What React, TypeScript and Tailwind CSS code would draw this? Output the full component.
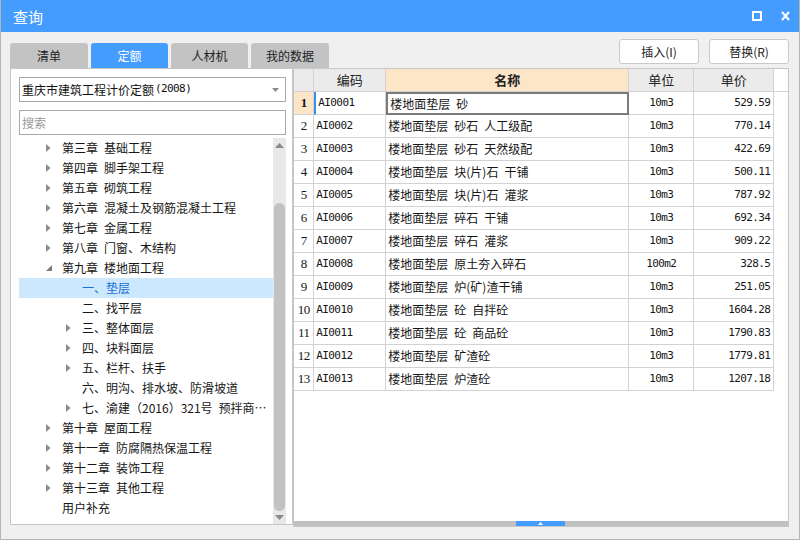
import React from "react";

const cjk = { fontFamily: '"Noto Sans CJK SC", "Noto Sans", sans-serif' };
const mono = { fontFamily: '"DejaVu Sans Mono", "Noto Sans CJK SC", monospace' };

type Node = { t: string; lv: number; a: "r" | "d" | "n"; sel?: boolean };
const tree: Node[] = [
  { t: "第三章\u2002基础工程", lv: 0, a: "r" },
  { t: "第四章\u2002脚手架工程", lv: 0, a: "r" },
  { t: "第五章\u2002砌筑工程", lv: 0, a: "r" },
  { t: "第六章\u2002混凝土及钢筋混凝土工程", lv: 0, a: "r" },
  { t: "第七章\u2002金属工程", lv: 0, a: "r" },
  { t: "第八章\u2002门窗、木结构", lv: 0, a: "r" },
  { t: "第九章\u2002楼地面工程", lv: 0, a: "d" },
  { t: "一、垫层", lv: 1, a: "n", sel: true },
  { t: "二、找平层", lv: 1, a: "n" },
  { t: "三、整体面层", lv: 1, a: "r" },
  { t: "四、块料面层", lv: 1, a: "r" },
  { t: "五、栏杆、扶手", lv: 1, a: "r" },
  { t: "六、明沟、排水坡、防滑坡道", lv: 1, a: "n" },
  { t: "七、渝建（2016）321号\u2002预拌商…", lv: 1, a: "r" },
  { t: "第十章\u2002屋面工程", lv: 0, a: "r" },
  { t: "第十一章\u2002防腐隔热保温工程", lv: 0, a: "r" },
  { t: "第十二章\u2002装饰工程", lv: 0, a: "r" },
  { t: "第十三章\u2002其他工程", lv: 0, a: "r" },
  { t: "用户补充", lv: 0, a: "n" },
];

const rows: [string, string, string, string][] = [
  ["AI0001", "楼地面垫层\u2002砂", "10m3", "529.59"],
  ["AI0002", "楼地面垫层\u2002砂石\u2002人工级配", "10m3", "770.14"],
  ["AI0003", "楼地面垫层\u2002砂石\u2002天然级配", "10m3", "422.69"],
  ["AI0004", "楼地面垫层\u2002块(片)石\u2002干铺", "10m3", "500.11"],
  ["AI0005", "楼地面垫层\u2002块(片)石\u2002灌浆", "10m3", "787.92"],
  ["AI0006", "楼地面垫层\u2002碎石\u2002干铺", "10m3", "692.34"],
  ["AI0007", "楼地面垫层\u2002碎石\u2002灌浆", "10m3", "909.22"],
  ["AI0008", "楼地面垫层\u2002原土夯入碎石", "100m2", "328.5"],
  ["AI0009", "楼地面垫层\u2002炉(矿)渣干铺", "10m3", "251.05"],
  ["AI0010", "楼地面垫层\u2002砼\u2002自拌砼", "10m3", "1604.28"],
  ["AI0011", "楼地面垫层\u2002砼\u2002商品砼", "10m3", "1790.83"],
  ["AI0012", "楼地面垫层\u2002矿渣砼", "10m3", "1779.81"],
  ["AI0013", "楼地面垫层\u2002炉渣砼", "10m3", "1207.18"],
];

function ArrowRight() {
  return (
    <svg width="5" height="8" viewBox="0 0 5 8">
      <path d="M0 0 L4.5 4 L0 8 Z" fill="#8c8c8c" />
    </svg>
  );
}
function ArrowDown() {
  return (
    <svg width="6" height="6" viewBox="0 0 6 6">
      <path d="M6 0 L6 6 L0 6 Z" fill="#7a7a7a" />
    </svg>
  );
}

export default function App() {
  return (
    <div
      className="w-[800px] h-[540px] bg-[#f0f0f0] flex flex-col border-x border-b border-[#b4b4b4] overflow-hidden"
      style={cjk}
    >
      {/* title bar */}
      <div className="h-[32px] shrink-0 bg-[#459cff] flex items-center pl-[12px] pr-[9px] text-white">
        <span className="text-[15px] leading-none">查询</span>
        <div className="flex-1" />
        <div className="w-[10px] h-[10px] border-2 border-white mr-[19px]" />
        <svg width="9" height="10" viewBox="0 0 9 10">
          <path d="M1 1 L8 9 M8 1 L1 9" stroke="#fff" strokeWidth="2" />
        </svg>
      </div>

      <div className="flex-1 flex flex-col pl-[9px] pr-[10px]">
        {/* tabs + buttons */}
        <div className="h-[36px] shrink-0 flex">
          <div className="flex items-end gap-[3px] text-[12px]">
            <div className="w-[78px] h-[25px] rounded-t-[3px] bg-[#c3c3c3] flex items-center justify-center text-[#222]">清单</div>
            <div className="w-[77px] h-[25px] rounded-t-[3px] bg-[#459cff] flex items-center justify-center text-white">定额</div>
            <div className="w-[77px] h-[25px] rounded-t-[3px] bg-[#c3c3c3] flex items-center justify-center text-[#222]">人材机</div>
            <div className="w-[78px] h-[25px] rounded-t-[3px] bg-[#c3c3c3] flex items-center justify-center text-[#222]">我的数据</div>
          </div>
          <div className="flex-1" />
          <div className="flex gap-[10px] pt-[7px]">
            <div className="w-[80px] h-[25px] bg-white border border-[#c9c9c9] rounded-[3px] flex items-center justify-center text-[12px] text-[#222]">插入(I)</div>
            <div className="w-[80px] h-[25px] bg-white border border-[#c9c9c9] rounded-[3px] flex items-center justify-center text-[12px] text-[#222]">替换(R)</div>
          </div>
        </div>

        {/* main */}
        <div className="flex">
          {/* left panel */}
          <div className="w-[284px] h-[457px] bg-white border border-[#c6c6c6] flex flex-col pl-[8px] pr-[6px]">
            <div className="mt-[8px] h-[25px] border border-[#a9a9a9] flex items-center pl-[2px] pr-[6px] text-[12px] text-[#111]">
              <span>重庆市建筑工程计价定额</span>
              <span style={mono} className="text-[11px] tracking-[-0.6px] ml-[1px]">(2008)</span>
              <div className="flex-1" />
              <svg width="7" height="4" viewBox="0 0 7 4">
                <path d="M0 0 L7 0 L3.5 4 Z" fill="#8a8a8a" />
              </svg>
            </div>
            <div className="mt-[8px] h-[25px] border border-[#a9a9a9] flex items-center pl-[2px] text-[12px] text-[#9a9a9a]">
              搜索
            </div>
            <div className="mt-[3px] flex flex-1 min-h-0">
              <div className="flex-1 flex flex-col">
                {tree.map((n, i) => (
                  <div
                    key={i}
                    className={
                      "h-[20px] flex items-center text-[12px] whitespace-nowrap " +
                      (n.sel ? "bg-[#cce8ff] text-[#1a6fd8]" : "text-[#161616]")
                    }
                  >
                    <div className={n.lv === 0 ? "w-[27px] shrink-0" : "w-[47px] shrink-0"} />
                    <div className="w-[16px] shrink-0 flex items-center">
                      {n.a === "r" && <ArrowRight />}
                      {n.a === "d" && <ArrowDown />}
                    </div>
                    <span>{n.t}</span>
                  </div>
                ))}
              </div>
              <div className="w-[13px] bg-[#e8e8e8] flex flex-col items-center">
                <div className="h-[14px] flex items-center justify-center">
                  <svg width="9" height="5" viewBox="0 0 9 5">
                    <path d="M0 5 L9 5 L4.5 0 Z" fill="#8a8a8a" />
                  </svg>
                </div>
                <div className="h-[51px]" />
                <div className="w-[11px] h-[308px] bg-[#c2c2c2] rounded-[6px]" />
                <div className="flex-1 flex items-center justify-center">
                  <svg width="9" height="5" viewBox="0 0 9 5">
                    <path d="M0 0 L9 0 L4.5 5 Z" fill="#8a8a8a" />
                  </svg>
                </div>
              </div>
            </div>
          </div>

          {/* right table */}
          <div className="w-[497px] h-[459px] bg-white border border-[#c6c6c6] flex flex-col">
            <div className="h-[23px] flex bg-[#ebebeb] border-b border-[#d2d2d2] text-[13px] text-[#222]">
              <div className="w-[20px] border-r border-[#d2d2d2]" />
              <div className="w-[72px] border-r border-[#d2d2d2] flex items-center justify-center">编码</div>
              <div className="w-[243px] border-r border-[#d2d2d2] flex items-center justify-center bg-[#fde6c8] font-bold">名称</div>
              <div className="w-[65px] border-r border-[#d2d2d2] flex items-center justify-center">单位</div>
              <div className="w-[80px] border-r border-[#d2d2d2] flex items-center justify-center">单价</div>
              <div className="flex-1 bg-white" />
            </div>
            {rows.map((r, i) => (
              <div key={i} className="h-[23px] flex text-[12px] text-[#161616]">
                <div
                  style={{ fontFamily: '"Liberation Serif", serif' }}
                  className={
                    "w-[20px] border-r border-b border-[#d2d2d2] flex items-center justify-center text-[13px] tracking-[-0.5px] " +
                    (i === 0 ? "bg-[#fde6c8] font-bold" : "")
                  }
                >
                  {i + 1}
                </div>
                <div
                  style={mono}
                  className={
                    "w-[72px] border-r border-b border-[#d2d2d2] flex items-center pl-[2px] text-[11px] tracking-[-0.6px] " +
                    (i === 0 ? "border-l-2 border-l-[#3c8fef] pl-0" : "")
                  }
                >
                  {r[0]}
                </div>
                <div
                  className={
                    "w-[243px] flex items-center pl-[2px] " +
                    (i === 0 ? "border-2 border-[#7a7a7a] pl-[1px]" : "border-r border-b border-[#d2d2d2]")
                  }
                >
                  {r[1]}
                </div>
                <div
                  style={mono}
                  className="w-[65px] border-r border-b border-[#d2d2d2] flex items-center justify-center text-[11px] tracking-[-0.6px]"
                >
                  {r[2]}
                </div>
                <div
                  style={mono}
                  className="w-[80px] border-r border-b border-[#d2d2d2] flex items-center justify-end pr-[3px] text-[11px] tracking-[-0.6px]"
                >
                  {r[3]}
                </div>
                <div className="flex-1" />
              </div>
            ))}
            <div className="flex-1" />
            <div className="h-[5px] bg-[#c0c0c0] flex">
              <div className="w-[222px]" />
              <div className="w-[49px] h-[5px] bg-[#459cff] flex items-center justify-center">
                <svg width="5" height="3" viewBox="0 0 5 3">
                  <path d="M0 3 L5 3 L2.5 0 Z" fill="#fff" />
                </svg>
              </div>
            </div>
          </div>
        </div>
      </div>
    </div>
  );
}
